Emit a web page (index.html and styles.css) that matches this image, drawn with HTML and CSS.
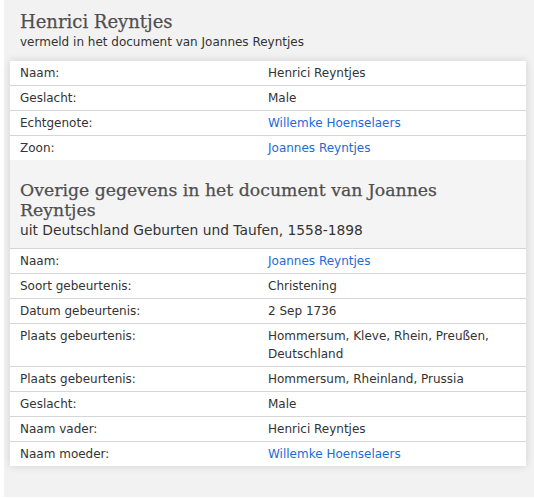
FILE: index.html
```html
<!DOCTYPE html>
<html>
<head>
<meta charset="utf-8">
<link rel="stylesheet" href="styles.css">
</head>
<body>
<div class="panel">
  <div class="intro">
    <h1 class="title">Henrici Reyntjes</h1>
    <div class="sub">vermeld in het document van Joannes Reyntjes</div>
  </div>
  <div class="card">
    <table class="facts">
      <tr><td>Naam:</td><td>Henrici Reyntjes</td></tr>
      <tr><td>Geslacht:</td><td>Male</td></tr>
      <tr><td>Echtgenote:</td><td><a href="#">Willemke Hoenselaers</a></td></tr>
      <tr class="last"><td>Zoon:</td><td><a href="#">Joannes Reyntjes</a></td></tr>
    </table>
    <div class="section-head">
      <h2 class="title">Overige gegevens in het document van Joannes Reyntjes</h2>
      <div class="sub2">uit Deutschland Geburten und Taufen, 1558-1898</div>
    </div>
    <table class="facts bordered">
      <tr><td>Naam:</td><td><a href="#">Joannes Reyntjes</a></td></tr>
      <tr><td>Soort gebeurtenis:</td><td>Christening</td></tr>
      <tr><td>Datum gebeurtenis:</td><td>2 Sep 1736</td></tr>
      <tr><td>Plaats gebeurtenis:</td><td>Hommersum, Kleve, Rhein, Preußen, Deutschland</td></tr>
      <tr><td>Plaats gebeurtenis:</td><td>Hommersum, Rheinland, Prussia</td></tr>
      <tr><td>Geslacht:</td><td>Male</td></tr>
      <tr><td>Naam vader:</td><td>Henrici Reyntjes</td></tr>
      <tr class="last"><td>Naam moeder:</td><td><a href="#">Willemke Hoenselaers</a></td></tr>
    </table>
  </div>
</div>
</body>
</html>
```
FILE: styles.css
```css
html, body {
  margin: 0;
  padding: 0;
  background: #ffffff;
}
body {
  font-family: "DejaVu Sans", Verdana, sans-serif;
  color: #333333;
  font-size: 12px;
}
.panel {
  margin-left: 4px;
  background: #f2f2f2;
  padding: 10px 8px 0 6px;
  height: 487px;
}
.intro {
  padding: 0 10px;
  margin-bottom: 10px;
}
.title {
  font-family: "DejaVu Serif", Georgia, serif;
  font-weight: normal;
  color: #4f4f4f;
  margin: 0;
  font-size: 18px;
  line-height: 24px;
  -webkit-text-stroke: 0.25px #4f4f4f;
}
.sub {
  font-size: 12px;
  line-height: 17px;
}
.card {
  background: #ffffff;
  box-shadow: 0 0 8px rgba(0, 0, 0, 0.14);
}
.facts {
  width: 100%;
  border-collapse: collapse;
  table-layout: fixed;
}
.facts td {
  padding: 3px 10px;
  line-height: 18px;
  vertical-align: top;
  border-bottom: 1px solid #d6d6d6;
}
.facts td + td {
  padding-left: 0;
}
.facts tr.last td {
  border-bottom: none;
}
.bordered {
  border-top: 1px solid #d6d6d6;
}
.facts a {
  color: #1d6ad8;
  text-decoration: none;
}
.section-head {
  background: #f4f4f4;
  padding: 20px 10px 8px;
}
.section-head .title {
  font-size: 17.3px;
  line-height: 20px;
}
.sub2 {
  font-size: 13.8px;
  line-height: 20px;
}
```
